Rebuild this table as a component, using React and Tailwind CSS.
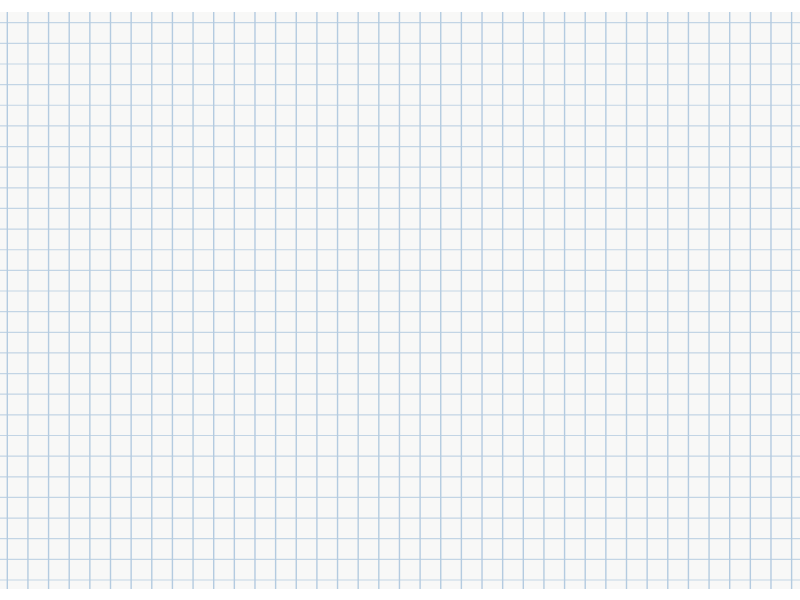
import React from "react";

export default function App() {
  const sp = 20.64;
  const vx = Array.from({ length: 39 }, (_, i) => 7.3 + i * sp);
  const hy = Array.from({ length: 28 }, (_, i) => 10.7 + i * sp);
  return (
    <div className="w-[800px] h-[600px] bg-white flex flex-col pt-[12px] pb-[11px]">
      <div className="flex-1 bg-[#f8f8f7]">
        <svg width="800" height="577" viewBox="0 0 800 577" className="block">
          {hy.map((y, i) => (
            <line key={"h" + i} x1="0" x2="800" y1={y} y2={y} stroke="#c3d5e5" strokeWidth="1.2" />
          ))}
          {vx.map((x, i) => (
            <line key={"v" + i} x1={x} x2={x} y1="0" y2="577" stroke="#b4cbe0" strokeWidth="1.4" />
          ))}
        </svg>
      </div>
    </div>
  );
}
